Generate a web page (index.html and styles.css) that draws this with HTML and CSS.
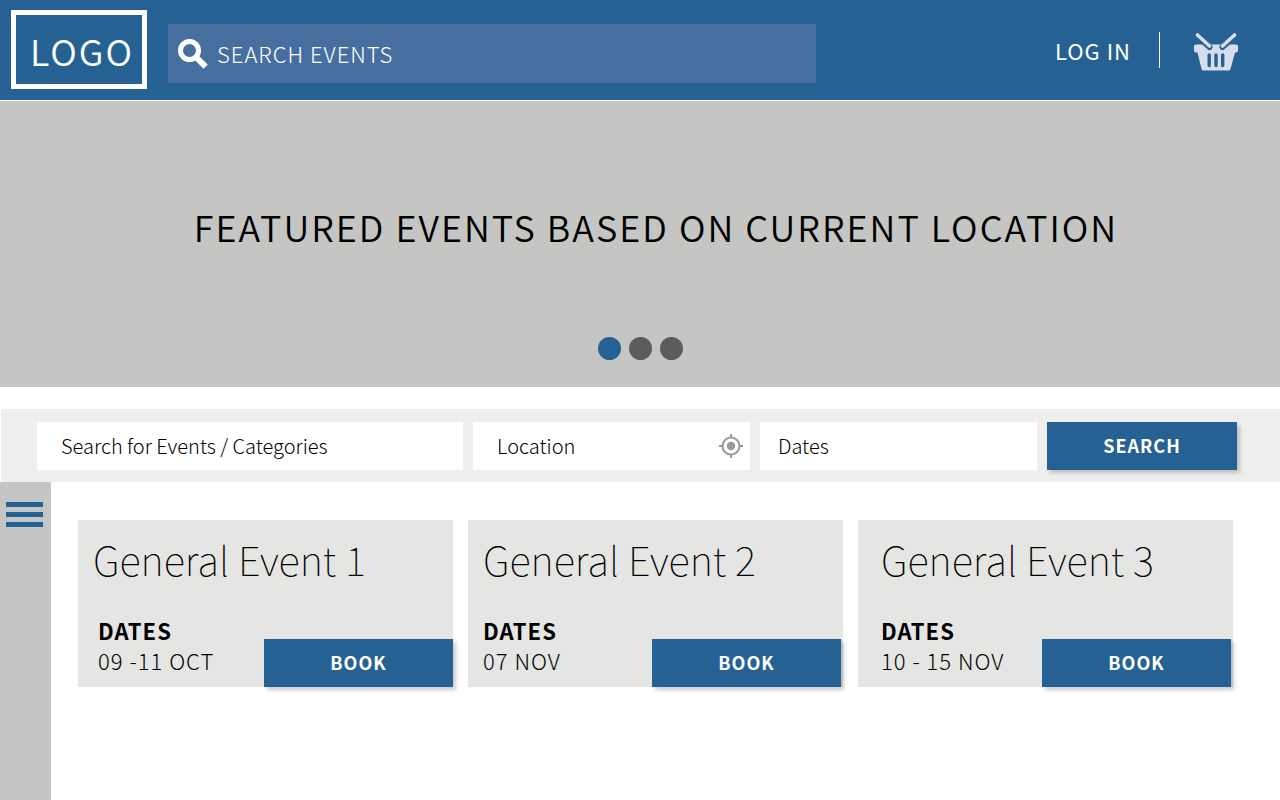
FILE: index.html
```html
<!DOCTYPE html>
<html lang="en">
<head>
<meta charset="utf-8">
<meta name="viewport" content="width=device-width, initial-scale=1">
<title>Events</title>
<link rel="stylesheet" href="styles.css">
</head>
<body>
<header class="header">
  <a class="logo" href="#">LOGO</a>
  <form class="site-search" role="search">
    <svg class="search-icon" viewBox="0 0 30 30" aria-hidden="true">
      <circle cx="11.5" cy="11.500" r="9" fill="none" stroke="#fff" stroke-width="5"/>
      <path d="M18.500 18.500L25.500 25.500" stroke="#fff" stroke-width="6" stroke-linecap="square"/>
    </svg>
    <input class="site-search-input" type="search" aria-label="Search events" placeholder="SEARCH EVENTS">
  </form>
  <nav class="account">
    <a class="login" href="#">LOG IN</a>
    <a class="basket" href="#" aria-label="Basket">
      <svg class="basket-icon" viewBox="0 0 44 38" aria-hidden="true">
        <path fill="#d9dcec" d="M2 11.500H42Q44 11.500 44 13.500V17.500Q44 19.500 42 19.500H41L36.500 36Q36 37.500 34.500 37.500H9.500Q8 37.500 7.500 36L3.500 19.500H2Q0 19.500 0 17.500V13.500Q0 11.500 2 11.500Z"/>
        <g fill="none" stroke-linecap="round">
          <path stroke="#256293" stroke-width="6" d="M11 10L15.500 14M33 10L28.500 14"/>
          <path stroke="#d9dcec" stroke-width="3.600" d="M3.500 2L15.500 13M40.500 2L28.500 13"/>
          <path stroke="#256293" stroke-width="3.400" d="M15.200 22V32.500M22 22V32.500M28.700 22V32.500"/>
        </g>
      </svg>
    </a>
  </nav>
</header>

<main>
  <section class="hero">
    <h1 class="hero-title">FEATURED EVENTS BASED ON CURRENT LOCATION</h1>
    <div class="dots">
      <button class="dot dot-active" type="button" aria-label="Slide 1"></button>
      <button class="dot" type="button" aria-label="Slide 2"></button>
      <button class="dot" type="button" aria-label="Slide 3"></button>
    </div>
  </section>

  <form class="filters">
    <input class="field field-keyword" type="text" aria-label="Search for Events / Categories" placeholder="Search for Events / Categories">
    <div class="location">
      <input class="field field-location" type="text" aria-label="Location" placeholder="Location">
      <button class="locate" type="button" aria-label="Use current location">
        <svg class="locate-icon" viewBox="0 0 24 24" aria-hidden="true">
          <g fill="none" stroke="#999" stroke-width="2">
            <circle cx="12" cy="12" r="8.500"/>
            <path d="M12 0V3.500M12 20.500V24M0 12H3.500M20.500 12H24"/>
          </g>
          <circle cx="12" cy="12" r="4.200" fill="#999"/>
        </svg>
      </button>
    </div>
    <input class="field" type="text" aria-label="Dates" placeholder="Dates">
    <button class="button" type="submit">SEARCH</button>
  </form>

  <div class="content">
    <aside class="sidebar">
      <button class="menu" type="button" aria-label="Menu">
        <span class="menu-bar"></span>
        <span class="menu-bar"></span>
        <span class="menu-bar"></span>
      </button>
    </aside>
    <section class="events">
      <article class="card card-first">
        <h2 class="card-title">General Event 1</h2>
        <div class="card-foot">
          <dl class="dates"><dt class="dates-label">DATES</dt><dd class="dates-value">09 -11 OCT</dd></dl>
          <button class="button book" type="button">BOOK</button>
        </div>
      </article>
      <article class="card">
        <h2 class="card-title">General Event 2</h2>
        <div class="card-foot">
          <dl class="dates"><dt class="dates-label">DATES</dt><dd class="dates-value">07 NOV</dd></dl>
          <button class="button book" type="button">BOOK</button>
        </div>
      </article>
      <article class="card card-last">
        <h2 class="card-title">General Event 3</h2>
        <div class="card-foot">
          <dl class="dates"><dt class="dates-label">DATES</dt><dd class="dates-value">10 - 15 NOV</dd></dl>
          <button class="button book" type="button">BOOK</button>
        </div>
      </article>
    </section>
  </div>
</main>
</body>
</html>
```
FILE: styles.css
```css
* { box-sizing: border-box; }

body {
  margin: 0;
  min-height: 100vh;
  display: flex;
  flex-direction: column;
  background: #fff;
  color: #000;
  font-family: "Noto Sans CJK SC", "Noto Sans", sans-serif;
}

main {
  flex: 1;
  display: flex;
  flex-direction: column;
}

a { color: inherit; text-decoration: none; }
button, input { font-family: inherit; border: 0; border-radius: 0; margin: 0; }
button { cursor: pointer; padding: 0; }

.header {
  display: flex;
  align-items: center;
  padding: 10px 42px 11px 11px;
  background: #256293;
  color: #fff;
}

.logo {
  padding: 7px 8px 6px 14px;
  border: 5px solid #fff;
  font-size: 36px;
  font-weight: 350;
  line-height: 56px;
  letter-spacing: 2px;
}

.site-search {
  display: flex;
  align-items: center;
  flex: 0 1 648px;
  min-width: 0;
  margin: 8px 0 0 21px;
  padding: 0 10px;
  background: #466f9f;
}

.search-icon { width: 30px; height: 30px; flex: none; }

.site-search-input {
  flex: 1;
  min-width: 0;
  height: 59px;
  padding: 0 9px 2px;
  background: none;
  color: #fff;
  font-size: 22px;
  font-weight: 300;
  letter-spacing: 1px;
}

.site-search-input::placeholder { color: #fff; opacity: 1; }

.account {
  display: flex;
  align-items: center;
  margin-left: auto;
}

.login {
  padding-right: 28px;
  border-right: 1px solid #fff;
  font-size: 22px;
  line-height: 36px;
  letter-spacing: 1px;
}

.basket { margin-left: 34px; }
.basket-icon { display: block; width: 44px; height: 38px; margin-top: 4px; }

.hero {
  display: flex;
  flex-direction: column;
  align-items: center;
  margin-top: 1px;
  padding: 97px 0 27px;
  background: #c5c5c3;
}

.hero-title {
  margin: 0;
  padding-left: 32px;
  font-size: 36px;
  font-weight: 350;
  line-height: 56px;
  letter-spacing: 2px;
}

.dots { display: flex; gap: 8px; margin-top: 83px; }
.dot { width: 23px; height: 23px; border-radius: 50%; background: #5b5d5c; }
.dot-active { background: #256293; }

.filters {
  display: grid;
  grid-template-columns: 426fr 277fr 277fr 190fr;
  gap: 10px;
  margin: 22px 0 0 1px;
  padding: 13px 43px 12px 36px;
  background: #eeeeec;
}

.field {
  width: 100%;
  min-width: 0;
  height: 48px;
  padding: 0 18px 2px;
  background: #fff;
  font-size: 20px;
  font-weight: 300;
}

.field::placeholder { color: #000; opacity: 1; }
.field-keyword { padding-left: 24px; }

.location {
  display: flex;
  align-items: center;
  background: #fff;
}

.field-location { flex: 1; padding: 0 0 2px 24px; }
.locate { margin-right: 7px; background: none; }
.locate-icon { display: block; width: 24px; height: 24px; }

.button {
  height: 48px;
  padding-bottom: 2px;
  background: #256293;
  color: #fff;
  font-size: 18px;
  font-weight: 700;
  letter-spacing: 1px;
  box-shadow: 3px 3px 4px rgba(0, 0, 0, 0.2);
}

.content { display: flex; flex: 1; }

.sidebar {
  flex: none;
  width: 51px;
  padding: 20px 6px;
  background: #c4c6c5;
}

.menu { display: grid; gap: 5px; width: 37px; background: none; }
.menu-bar { height: 5px; background: #256293; }

.events {
  flex: 1;
  display: grid;
  grid-template-columns: repeat(3, 1fr);
  align-items: start;
  gap: 15px;
  padding: 38px 47px 38px 27px;
}

.card { padding: 9px 2px 0 15px; background: #e5e5e3; }
.card-first { padding-right: 0; }
.card-first .dates { padding-left: 5px; }
.card-last { padding-left: 23px; }

.card-title {
  margin: 0;
  font-size: 40px;
  font-weight: 100;
  line-height: 60px;
}

.card-foot {
  display: flex;
  justify-content: space-between;
  align-items: flex-end;
  margin-top: 26px;
}

.dates {
  margin: 0;
  padding-bottom: 12px;
  font-size: 22px;
  line-height: 30px;
  letter-spacing: 1px;
}
.dates-label { font-weight: 700; }
.dates-value { margin: 0; font-weight: 300; }
.book { flex: none; width: 189px; }
```
